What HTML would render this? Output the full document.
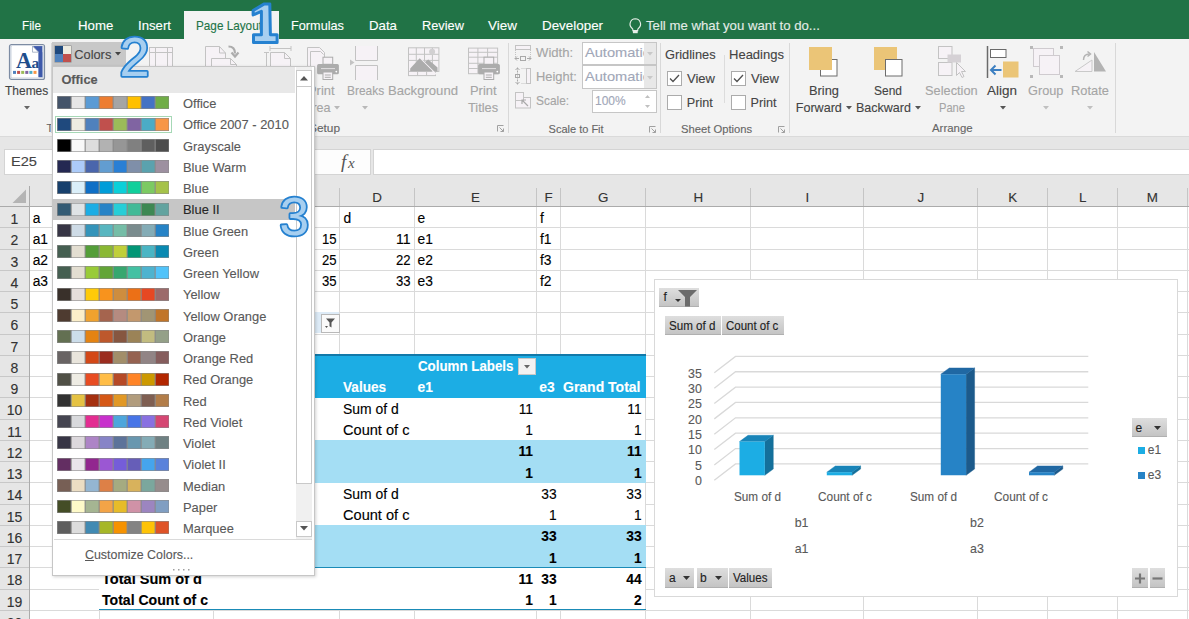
<!DOCTYPE html>
<html><head><meta charset="utf-8"><style>
html,body{margin:0;padding:0;width:1189px;height:619px;overflow:hidden;background:#fff;}
body{position:relative;font-family:"Liberation Sans", sans-serif;}
div{box-sizing:border-box;-webkit-text-stroke:0.12px currentColor;}
</style></head><body>
<div style="position:absolute;left:0px;top:0px;width:1189px;height:39px;background:#217346;"></div>
<div style="position:absolute;left:184px;top:11px;width:95px;height:28px;background:#f3f3f3;"></div>
<div style="position:absolute;left:21.50px;top:25.86px;line-height:0;font-size:13.4px;color:#ffffff;font-weight:normal;white-space:nowrap;transform:scaleX(0.8799);transform-origin:0 0;">File</div>
<div style="position:absolute;left:78.00px;top:25.86px;line-height:0;font-size:13.4px;color:#ffffff;font-weight:normal;white-space:nowrap;transform:scaleX(0.9875);transform-origin:0 0;">Home</div>
<div style="position:absolute;left:138.00px;top:25.86px;line-height:0;font-size:13.4px;color:#ffffff;font-weight:normal;white-space:nowrap;transform:scaleX(0.9847);transform-origin:0 0;">Insert</div>
<div style="position:absolute;left:291.00px;top:25.86px;line-height:0;font-size:13.4px;color:#ffffff;font-weight:normal;white-space:nowrap;transform:scaleX(0.9490);transform-origin:0 0;">Formulas</div>
<div style="position:absolute;left:369.00px;top:25.86px;line-height:0;font-size:13.4px;color:#ffffff;font-weight:normal;white-space:nowrap;transform:scaleX(0.9892);transform-origin:0 0;">Data</div>
<div style="position:absolute;left:422.00px;top:25.86px;line-height:0;font-size:13.4px;color:#ffffff;font-weight:normal;white-space:nowrap;transform:scaleX(0.9559);transform-origin:0 0;">Review</div>
<div style="position:absolute;left:488.00px;top:25.86px;line-height:0;font-size:13.4px;color:#ffffff;font-weight:normal;white-space:nowrap;transform:scaleX(1.0068);transform-origin:0 0;">View</div>
<div style="position:absolute;left:542.00px;top:25.86px;line-height:0;font-size:13.4px;color:#ffffff;font-weight:normal;white-space:nowrap;">Developer</div>
<div style="position:absolute;left:196.00px;top:25.86px;line-height:0;font-size:13.4px;color:#217346;font-weight:normal;white-space:nowrap;transform:scaleX(0.8770);transform-origin:0 0;">Page Layout</div>
<div style="position:absolute;left:646.00px;top:25.86px;line-height:0;font-size:13.4px;color:#e3ece6;font-weight:normal;white-space:nowrap;transform:scaleX(0.9857);transform-origin:0 0;">Tell me what you want to do...</div>
<svg style="position:absolute;left:628.5px;top:18.2px;overflow:visible;" width="13" height="16" viewBox="0 0 13 16"><path d="M6.3 0.8a5.3 5.3 0 0 0-3.3 9.4c.6.5.9 1 .9 1.7v.7h4.8v-.7c0-.7.3-1.2.9-1.7A5.3 5.3 0 0 0 6.3 0.8z" fill="none" stroke="#e6eee8" stroke-width="1.15"/><rect x="3.9" y="12.6" width="4.8" height="2.6" fill="#e6eee8"/></svg>
<div style="position:absolute;left:0px;top:39px;width:1189px;height:98px;background:#f3f3f3;"></div>
<div style="position:absolute;left:0px;top:136px;width:1189px;height:1px;background:#dadada;"></div>
<div style="position:absolute;left:0px;top:137px;width:1189px;height:49px;background:#e6e6e6;"></div>
<svg style="position:absolute;left:9px;top:44px;overflow:visible;" width="36" height="36" viewBox="0 0 36 36"><rect x="0.5" y="0.5" width="35" height="35" rx="2" fill="#eef1f5" stroke="#7d8ca3" stroke-width="1.2"/>
<rect x="2" y="2" width="32" height="32" fill="#f8f9fb" stroke="#b7c2d2" stroke-width="0.8"/>
<path d="M24.2 2.1H33.3V33H24.2z" fill="#3d59ab"/>
<path d="M2.8 2.1H23.5L29.6 8.2V33.3H2.8z" fill="#ffffff"/>
<path d="M23.5 2.1V8.2H29.6z" fill="#ffffff" stroke="#8d9bb3" stroke-width="0.7"/>
<text x="7" y="23.8" font-family="Liberation Serif" font-weight="bold" font-size="24" fill="#1f4e8c" transform="translate(7 23.8) scale(0.92 1) translate(-7 -23.8)">A</text>
<text x="22.6" y="23.8" font-family="Liberation Serif" font-weight="bold" font-size="15.5" fill="#1f4e8c">a</text>
<path d="M29.6 8.2V33.3H24z" fill="none"/><rect x="29.6" y="8.2" width="3.7" height="25" fill="#3d59ab"/>
<rect x="4" y="26.9" width="3" height="3" fill="#4f81bd"/><rect x="8.1" y="26.9" width="3" height="3" fill="#c0504d"/><rect x="12.2" y="26.9" width="3" height="3" fill="#9bbb59"/><rect x="16.3" y="26.9" width="3" height="3" fill="#8064a2"/><rect x="20.4" y="26.9" width="3" height="3" fill="#4bacc6"/><rect x="24.5" y="26.9" width="3" height="3" fill="#f79646"/></svg>
<div style="position:absolute;left:5.20px;top:90.63px;line-height:0;font-size:12.6px;color:#444444;font-weight:normal;white-space:nowrap;transform:scaleX(0.9513);transform-origin:0 0;">Themes</div>
<svg style="position:absolute;left:24.0px;top:105.75px;overflow:visible;" width="6" height="3.5" viewBox="0 0 6 3.5"><path d="M0 0H6L3.0 3.5z" fill="#666"/></svg>
<div style="position:absolute;left:46.50px;top:128.39px;line-height:0;font-size:11px;color:#666666;font-weight:normal;white-space:nowrap;">T</div>
<div style="position:absolute;left:51px;top:43px;width:1px;height:90px;background:#d8d8d8;"></div>
<div style="position:absolute;left:52px;top:42px;width:74px;height:24.5px;background:#c8c8c8;"></div>
<svg style="position:absolute;left:54px;top:45px;overflow:visible;" width="18" height="18" viewBox="0 0 18 18"><rect x="0.5" y="0.5" width="17" height="17" fill="#888"/><rect x="1" y="1" width="8" height="8" fill="#1f497d"/><rect x="9" y="1" width="8" height="8" fill="#eeece1"/><rect x="1" y="9" width="8" height="8" fill="#4f81bd"/><rect x="9" y="9" width="8" height="8" fill="#c0504d"/></svg>
<div style="position:absolute;left:74.30px;top:54.56px;line-height:0;font-size:12.8px;color:#444444;font-weight:normal;white-space:nowrap;">Colors</div>
<svg style="position:absolute;left:114.5px;top:51.95px;overflow:visible;" width="6" height="3.5" viewBox="0 0 6 3.5"><path d="M0 0H6L3.0 3.5z" fill="#444"/></svg>
<svg style="position:absolute;left:148px;top:46px;overflow:visible;" width="26" height="22" viewBox="0 0 26 22"><rect x="1.5" y="1.5" width="23" height="21" fill="#f6f2f6" stroke="#c3c3c3"/><path d="M7.5 1.5v21M19.5 1.5v21M1.5 6.5h23" stroke="#c3c3c3"/></svg>
<svg style="position:absolute;left:204px;top:44px;overflow:visible;" width="36" height="26" viewBox="0 0 36 26"><path d="M1.5 25V2.5h14l6 6.5V25" fill="#f6f2f6" stroke="#c3c3c3"/><path d="M15.5 2.5V9h6" fill="none" stroke="#c3c3c3"/><path d="M7.5 25V14.5h19l6 6V25" fill="#f6f2f6" stroke="#c3c3c3"/><path d="M26.5 14.5V20.5h6" fill="none" stroke="#c3c3c3"/><path d="M24.5 2.5c4 0 6.5 2.5 6.5 7" fill="none" stroke="#acacac" stroke-width="2.2"/><path d="M27.5 8.5l3.5 4 3.5-4" fill="none" stroke="#acacac" stroke-width="2.2"/></svg>
<svg style="position:absolute;left:264px;top:44px;overflow:visible;" width="30" height="26" viewBox="0 0 30 26"><path d="M6 4.5h21M6 2v5M27 2v5M2.5 8.5v18M0 8.5h5" fill="none" stroke="#c3c3c3"/><path d="M6.5 26V8.5h14l6 6V26" fill="#f6f2f6" stroke="#c3c3c3"/><path d="M20.5 8.5v6h6" fill="none" stroke="#c3c3c3"/></svg>
<svg style="position:absolute;left:305px;top:46px;overflow:visible;" width="36" height="36" viewBox="0 0 36 36"><path d="M2.5 28.5V1.5h12l5 5v8" fill="#f6f2f6" stroke="#c3c3c3"/><path d="M5.5 28.5V5.5h10l3 3" fill="none" stroke="#c3c3c3"/><rect x="18" y="11.2" width="9.7" height="7.1" fill="#f6f2f6" stroke="#acacac"/><rect x="12.1" y="18" width="21.8" height="10.3" rx="1.5" fill="#acacac"/><path d="M16 22.6h14" stroke="#e2dfe2" stroke-width="1"/><circle cx="31.3" cy="25.6" r="0.9" fill="#fff"/><rect x="18" y="26" width="9.7" height="7.5" fill="#f6f2f6" stroke="#acacac"/><path d="M19.8 29h6M19.8 31.3h6" stroke="#acacac"/></svg>
<div style="position:absolute;left:308.00px;top:91.03px;line-height:0;font-size:12.6px;color:#a5a5a5;font-weight:normal;white-space:nowrap;transform:scaleX(1.0267);transform-origin:0 0;">Print</div>
<div style="position:absolute;left:304.00px;top:108.23px;line-height:0;font-size:12.6px;color:#a5a5a5;font-weight:normal;white-space:nowrap;">Area</div>
<svg style="position:absolute;left:334.0px;top:105.75px;overflow:visible;" width="6" height="3.5" viewBox="0 0 6 3.5"><path d="M0 0H6L3.0 3.5z" fill="#b8b8b8"/></svg>
<svg style="position:absolute;left:348px;top:46px;overflow:visible;" width="32" height="34" viewBox="0 0 32 34"><path d="M7.5 0v14.5h22V0" fill="#f6f2f6" stroke="#c3c3c3"/><path d="M7.5 34V19.5h22V34" fill="#f6f2f6" stroke="#c3c3c3"/><path d="M2 13.5l4.5 3-4.5 3z" fill="#c3c3c3"/></svg>
<div style="position:absolute;left:346.80px;top:91.03px;line-height:0;font-size:12.6px;color:#a5a5a5;font-weight:normal;white-space:nowrap;transform:scaleX(0.9486);transform-origin:0 0;">Breaks</div>
<svg style="position:absolute;left:362.4px;top:105.75px;overflow:visible;" width="6" height="3.5" viewBox="0 0 6 3.5"><path d="M0 0H6L3.0 3.5z" fill="#b8b8b8"/></svg>
<svg style="position:absolute;left:407px;top:46px;overflow:visible;" width="34" height="34" viewBox="0 0 34 34"><rect x="1.5" y="1.8" width="30.4" height="23.6" fill="#f6f2f6" stroke="#c3c3c3"/><path d="M1.5 8.3h30.4M1.5 14.4h30.4M9.3 1.8v23.6M17.5 1.8v23.6M25.4 1.8v23.6" stroke="#c3c3c3"/><rect x="1.5" y="25.4" width="27" height="4.2" fill="#f6f2f6" stroke="#c3c3c3"/><path d="M10.6 25.4v4.2M19.6 25.4v4.2" stroke="#c3c3c3"/><circle cx="25.1" cy="5.7" r="3" fill="#d2d0d2"/><path d="M17.5 16.2L21.3 13.4L30.5 21.6V25.5H26z" fill="#acacac"/><path d="M12.7 12.2L29 28.2" stroke="#f6f2f6" stroke-width="1.6"/><path d="M3.2 25.2V22.5L12.7 12.2L25.7 25.2z" fill="#acacac"/></svg>
<div style="position:absolute;left:388.00px;top:90.53px;line-height:0;font-size:12.6px;color:#a5a5a5;font-weight:normal;white-space:nowrap;transform:scaleX(1.0409);transform-origin:0 0;">Background</div>
<svg style="position:absolute;left:466px;top:46px;overflow:visible;" width="36" height="36" viewBox="0 0 36 36"><rect x="2.5" y="2.1" width="29.1" height="25.6" fill="#f6f2f6" stroke="#c3c3c3"/><path d="M2.5 6.3h29.1M2.5 11.2h29.1M2.5 17.3h29.1M2.5 22.5h29.1M11.9 2.1v25.6M21.6 2.1v25.6" stroke="#c3c3c3"/><rect x="18" y="11.2" width="9.7" height="7.1" fill="#f6f2f6" stroke="#acacac"/><rect x="12.1" y="18" width="21.8" height="10.3" rx="1.5" fill="#acacac"/><path d="M16 22.6h14" stroke="#e2dfe2" stroke-width="1"/><circle cx="31.3" cy="25.6" r="0.9" fill="#fff"/><rect x="18" y="26" width="9.7" height="7.5" fill="#f6f2f6" stroke="#acacac"/><path d="M19.8 29h6M19.8 31.3h6" stroke="#acacac"/></svg>
<div style="position:absolute;left:469.80px;top:90.53px;line-height:0;font-size:12.6px;color:#a5a5a5;font-weight:normal;white-space:nowrap;transform:scaleX(1.0267);transform-origin:0 0;">Print</div>
<div style="position:absolute;left:467.90px;top:107.93px;line-height:0;font-size:12.6px;color:#a5a5a5;font-weight:normal;white-space:nowrap;transform:scaleX(1.0156);transform-origin:0 0;">Titles</div>
<div style="position:absolute;left:309.00px;top:128.39px;line-height:0;font-size:11px;color:#666666;font-weight:normal;white-space:nowrap;transform:scaleX(1.0784);transform-origin:0 0;">Setup</div>
<svg style="position:absolute;left:497px;top:125px;overflow:visible;" width="7" height="7" viewBox="0 0 7 7"><path d="M0.5 6.5V0.5H6.5" fill="none" stroke="#a0a0a0" stroke-width="1"/><path d="M2.5 2.5L6.5 6.5M6.5 3.5V6.5H3.5" fill="none" stroke="#a0a0a0" stroke-width="1"/></svg>
<div style="position:absolute;left:508px;top:43px;width:1px;height:90px;background:#d8d8d8;"></div>
<svg style="position:absolute;left:514px;top:44px;overflow:visible;" width="19" height="18" viewBox="0 0 19 18"><rect x="1.5" y="1.5" width="15" height="4" fill="#f6f2f6" stroke="#c3c3c3"/><path d="M1.5 6v7M16.5 6v7" stroke="#c3c3c3" stroke-dasharray="1 1"/><path d="M1 14.5h4M13 14.5h4M3 12.5l-2 2 2 2M15 12.5l2 2-2 2" fill="none" stroke="#a9a9a9"/><rect x="6.5" y="12.5" width="5" height="4" fill="none" stroke="#a9a9a9"/></svg>
<div style="position:absolute;left:535.70px;top:53.33px;line-height:0;font-size:12.6px;color:#a5a5a5;font-weight:normal;white-space:nowrap;transform:scaleX(1.0418);transform-origin:0 0;">Width:</div>
<div style="position:absolute;left:582px;top:41.5px;width:74.5px;height:23.5px;background:#ffffff;border:1px solid #c6c6c6;"></div>
<div style="position:absolute;left:644px;top:42.5px;width:11.5px;height:21.5px;background:#e8e8e8;"></div>
<div style="position:absolute;left:583px;top:42.5px;width:60.5px;height:21.5px;overflow:hidden;"><div style="position:absolute;left:1.50px;top:10.83px;line-height:0;font-size:12.6px;color:#a1a7b8;font-weight:normal;white-space:nowrap;transform:scaleX(1.1602);transform-origin:0 0;">Automatic</div></div>
<svg style="position:absolute;left:647.0px;top:51.75px;overflow:visible;" width="6" height="3.5" viewBox="0 0 6 3.5"><path d="M0 0H6L3.0 3.5z" fill="#c8c8c8"/></svg>
<svg style="position:absolute;left:514px;top:67px;overflow:visible;" width="19" height="19" viewBox="0 0 19 19"><path d="M3.5 0.5v17" stroke="#a9a9a9" stroke-dasharray="2 1"/><path d="M1.5 3l2-2 2 2M1.5 15l2 2 2-2" fill="none" stroke="#a9a9a9"/><rect x="1.5" y="7.5" width="4" height="3" fill="none" stroke="#a9a9a9"/><path d="M7.5 1.5h5M7.5 16.5h5" stroke="#c3c3c3" stroke-dasharray="1 1"/><rect x="12.5" y="1.5" width="4" height="15" fill="#f6f2f6" stroke="#c3c3c3"/></svg>
<div style="position:absolute;left:535.70px;top:77.23px;line-height:0;font-size:12.6px;color:#a5a5a5;font-weight:normal;white-space:nowrap;transform:scaleX(1.0220);transform-origin:0 0;">Height:</div>
<div style="position:absolute;left:582px;top:65px;width:74.5px;height:23.5px;background:#ffffff;border:1px solid #c6c6c6;"></div>
<div style="position:absolute;left:644px;top:66px;width:11.5px;height:21.5px;background:#e8e8e8;"></div>
<div style="position:absolute;left:583px;top:66px;width:60.5px;height:21.5px;overflow:hidden;"><div style="position:absolute;left:1.50px;top:11.23px;line-height:0;font-size:12.6px;color:#a1a7b8;font-weight:normal;white-space:nowrap;transform:scaleX(1.1602);transform-origin:0 0;">Automatic</div></div>
<svg style="position:absolute;left:647.0px;top:75.75px;overflow:visible;" width="6" height="3.5" viewBox="0 0 6 3.5"><path d="M0 0H6L3.0 3.5z" fill="#c8c8c8"/></svg>
<svg style="position:absolute;left:514px;top:91px;overflow:visible;" width="19" height="19" viewBox="0 0 19 19"><rect x="1.5" y="1.5" width="8" height="8" fill="none" stroke="#c3c3c3" stroke-dasharray="1 1"/><rect x="1.5" y="6.5" width="15" height="10.5" fill="#f6f2f6" stroke="#c3c3c3"/><rect x="1.5" y="1.5" width="8" height="8" fill="#f6f2f6" stroke="#c3c3c3"/><path d="M8 9l6 6M8 13V9h4" fill="none" stroke="#a9a9a9" stroke-width="1.2"/></svg>
<div style="position:absolute;left:535.70px;top:101.13px;line-height:0;font-size:12.6px;color:#a5a5a5;font-weight:normal;white-space:nowrap;transform:scaleX(0.9452);transform-origin:0 0;">Scale:</div>
<div style="position:absolute;left:591.5px;top:89.5px;width:65px;height:23px;background:#ffffff;border:1px solid #c6c6c6;"></div>
<div style="position:absolute;left:594.70px;top:101.13px;line-height:0;font-size:12.6px;color:#a1a7b8;font-weight:normal;white-space:nowrap;transform:scaleX(0.9526);transform-origin:0 0;">100%</div>
<svg style="position:absolute;left:645px;top:104.5px;overflow:visible;" width="5" height="3" viewBox="0 0 5 3"><path d="M0 0H5L2.5 3z" fill="#c0c0c0"/></svg>
<svg style="position:absolute;left:645px;top:95px;overflow:visible;" width="5" height="3" viewBox="0 0 5 3"><path d="M0 3H5L2.5 0z" fill="#c0c0c0"/></svg>
<div style="position:absolute;left:548.60px;top:128.69px;line-height:0;font-size:11px;color:#666666;font-weight:normal;white-space:nowrap;">Scale to Fit</div>
<svg style="position:absolute;left:649px;top:125.5px;overflow:visible;" width="7" height="7" viewBox="0 0 7 7"><path d="M0.5 6.5V0.5H6.5" fill="none" stroke="#a0a0a0" stroke-width="1"/><path d="M2.5 2.5L6.5 6.5M6.5 3.5V6.5H3.5" fill="none" stroke="#a0a0a0" stroke-width="1"/></svg>
<div style="position:absolute;left:660px;top:43px;width:1px;height:90px;background:#d8d8d8;"></div>
<div style="position:absolute;left:665.00px;top:55.43px;line-height:0;font-size:12.6px;color:#444444;font-weight:normal;white-space:nowrap;transform:scaleX(1.0177);transform-origin:0 0;">Gridlines</div>
<div style="position:absolute;left:729.00px;top:55.43px;line-height:0;font-size:12.6px;color:#444444;font-weight:normal;white-space:nowrap;transform:scaleX(1.0331);transform-origin:0 0;">Headings</div>
<div style="position:absolute;left:724px;top:55px;width:1px;height:48px;background:#dcdcdc;"></div>
<svg style="position:absolute;left:667px;top:71px;overflow:visible;" width="15" height="15" viewBox="0 0 15 15"><rect x="0.5" y="0.5" width="14" height="14" fill="#fff" stroke="#ababab"/><path d="M3 7.5l3 3 6-6.5" fill="none" stroke="#505050" stroke-width="1.3"/></svg>
<svg style="position:absolute;left:667px;top:95px;overflow:visible;" width="15" height="15" viewBox="0 0 15 15"><rect x="0.5" y="0.5" width="14" height="14" fill="#fff" stroke="#ababab"/></svg>
<svg style="position:absolute;left:731px;top:71px;overflow:visible;" width="15" height="15" viewBox="0 0 15 15"><rect x="0.5" y="0.5" width="14" height="14" fill="#fff" stroke="#ababab"/><path d="M3 7.5l3 3 6-6.5" fill="none" stroke="#505050" stroke-width="1.3"/></svg>
<svg style="position:absolute;left:731px;top:95px;overflow:visible;" width="15" height="15" viewBox="0 0 15 15"><rect x="0.5" y="0.5" width="14" height="14" fill="#fff" stroke="#ababab"/></svg>
<div style="position:absolute;left:686.80px;top:79.23px;line-height:0;font-size:12.6px;color:#444444;font-weight:normal;white-space:nowrap;transform:scaleX(1.0338);transform-origin:0 0;">View</div>
<div style="position:absolute;left:686.80px;top:103.43px;line-height:0;font-size:12.6px;color:#444444;font-weight:normal;white-space:nowrap;">Print</div>
<div style="position:absolute;left:750.60px;top:79.23px;line-height:0;font-size:12.6px;color:#444444;font-weight:normal;white-space:nowrap;transform:scaleX(1.0338);transform-origin:0 0;">View</div>
<div style="position:absolute;left:750.60px;top:103.43px;line-height:0;font-size:12.6px;color:#444444;font-weight:normal;white-space:nowrap;">Print</div>
<div style="position:absolute;left:680.80px;top:128.69px;line-height:0;font-size:11px;color:#666666;font-weight:normal;white-space:nowrap;transform:scaleX(1.0213);transform-origin:0 0;">Sheet Options</div>
<svg style="position:absolute;left:777.5px;top:125.5px;overflow:visible;" width="7" height="7" viewBox="0 0 7 7"><path d="M0.5 6.5V0.5H6.5" fill="none" stroke="#a0a0a0" stroke-width="1"/><path d="M2.5 2.5L6.5 6.5M6.5 3.5V6.5H3.5" fill="none" stroke="#a0a0a0" stroke-width="1"/></svg>
<div style="position:absolute;left:789px;top:43px;width:1px;height:90px;background:#d8d8d8;"></div>
<svg style="position:absolute;left:808px;top:46px;overflow:visible;" width="32" height="32" viewBox="0 0 32 32"><rect x="12.5" y="13.5" width="16.5" height="16.5" fill="#fff" stroke="#6d6d6d"/><rect x="1" y="1" width="23" height="23" fill="#ebc577"/></svg>
<div style="position:absolute;left:808.60px;top:91.03px;line-height:0;font-size:12.6px;color:#444444;font-weight:normal;white-space:nowrap;transform:scaleX(1.0165);transform-origin:0 0;">Bring</div>
<div style="position:absolute;left:795.70px;top:108.23px;line-height:0;font-size:12.6px;color:#444444;font-weight:normal;white-space:nowrap;">Forward</div>
<svg style="position:absolute;left:846.0px;top:105.75px;overflow:visible;" width="6" height="3.5" viewBox="0 0 6 3.5"><path d="M0 0H6L3.0 3.5z" fill="#555"/></svg>
<svg style="position:absolute;left:873px;top:46px;overflow:visible;" width="32" height="32" viewBox="0 0 32 32"><rect x="1" y="1" width="23" height="23" fill="#ebc577"/><rect x="12.5" y="13.5" width="16.5" height="16.5" fill="#fff" stroke="#6d6d6d"/></svg>
<div style="position:absolute;left:874.30px;top:91.03px;line-height:0;font-size:12.6px;color:#444444;font-weight:normal;white-space:nowrap;transform:scaleX(0.9515);transform-origin:0 0;">Send</div>
<div style="position:absolute;left:856.20px;top:108.23px;line-height:0;font-size:12.6px;color:#444444;font-weight:normal;white-space:nowrap;transform:scaleX(0.9941);transform-origin:0 0;">Backward</div>
<svg style="position:absolute;left:915.0px;top:105.75px;overflow:visible;" width="6" height="3.5" viewBox="0 0 6 3.5"><path d="M0 0H6L3.0 3.5z" fill="#555"/></svg>
<svg style="position:absolute;left:936px;top:45px;overflow:visible;" width="32" height="34" viewBox="0 0 32 34"><rect x="2.5" y="1.5" width="13.5" height="12" fill="#f6f2f6" stroke="#c3c3c3"/><rect x="2.5" y="17.5" width="13.5" height="13" fill="#f6f2f6" stroke="#c3c3c3"/><rect x="11.5" y="9.5" width="13.5" height="8" fill="#d5d1d5"/><path d="M20.5 17.5v13l3-3 2.5 5 2-1-2.5-5h4z" fill="#f6f2f6" stroke="#c3c3c3"/></svg>
<div style="position:absolute;left:925.00px;top:91.03px;line-height:0;font-size:12.6px;color:#a5a5a5;font-weight:normal;white-space:nowrap;transform:scaleX(1.0167);transform-origin:0 0;">Selection</div>
<div style="position:absolute;left:938.50px;top:107.83px;line-height:0;font-size:12.6px;color:#a5a5a5;font-weight:normal;white-space:nowrap;transform:scaleX(0.8835);transform-origin:0 0;">Pane</div>
<svg style="position:absolute;left:985px;top:45px;overflow:visible;" width="36" height="34" viewBox="0 0 36 34"><path d="M2.5 1v32" stroke="#6a6a6a" stroke-width="1.5"/><rect x="5.5" y="4.5" width="15.5" height="8" fill="#fff" stroke="#6a6a6a"/><rect x="18" y="16.5" width="15.5" height="16" fill="#ebc577"/><path d="M16.5 25H7" stroke="#3c7fc1" stroke-width="2"/><path d="M10.5 20.5L6 25l4.5 4.5" fill="none" stroke="#3c7fc1" stroke-width="2"/></svg>
<div style="position:absolute;left:987.00px;top:91.03px;line-height:0;font-size:12.6px;color:#444444;font-weight:normal;white-space:nowrap;transform:scaleX(1.0707);transform-origin:0 0;">Align</div>
<svg style="position:absolute;left:999.5px;top:105.55px;overflow:visible;" width="6" height="3.5" viewBox="0 0 6 3.5"><path d="M0 0H6L3.0 3.5z" fill="#555"/></svg>
<svg style="position:absolute;left:1029px;top:45px;overflow:visible;" width="36" height="34" viewBox="0 0 36 34"><rect x="4.5" y="3.5" width="20" height="18" fill="#f6f2f6" stroke="#cfcbcf" stroke-dasharray="0"/><rect x="10.5" y="10.5" width="20" height="19" fill="#f6f2f6" stroke="#cfcbcf"/><path d="M4.5 21.5V3.5h20" fill="none" stroke="#cfcbcf"/><rect x="1" y="1" width="3" height="3" fill="#b8b8b8"/><rect x="31" y="1" width="3" height="3" fill="#b8b8b8"/><rect x="1" y="30" width="3" height="3" fill="#b8b8b8"/><rect x="31" y="30" width="3" height="3" fill="#b8b8b8"/></svg>
<div style="position:absolute;left:1028.00px;top:91.03px;line-height:0;font-size:12.6px;color:#a5a5a5;font-weight:normal;white-space:nowrap;transform:scaleX(1.0108);transform-origin:0 0;">Group</div>
<svg style="position:absolute;left:1043.0px;top:105.55px;overflow:visible;" width="6" height="3.5" viewBox="0 0 6 3.5"><path d="M0 0H6L3.0 3.5z" fill="#c0c0c0"/></svg>
<svg style="position:absolute;left:1073px;top:49px;overflow:visible;" width="36" height="26" viewBox="0 0 36 26"><path d="M2 22.5L19 11v11.5z" fill="#f6f2f6" stroke="#c9c9c9"/><path d="M21 22.5V3l12 19.5z" fill="#b3b3b3"/><path d="M10.5 11c0-4 2.5-6 6-6" fill="none" stroke="#b3b3b3" stroke-width="1.5"/><path d="M14.5 2.5l3 2.5-3 2.5" fill="none" stroke="#b3b3b3" stroke-width="1.5"/></svg>
<div style="position:absolute;left:1071.40px;top:91.03px;line-height:0;font-size:12.6px;color:#a5a5a5;font-weight:normal;white-space:nowrap;transform:scaleX(1.0209);transform-origin:0 0;">Rotate</div>
<svg style="position:absolute;left:1087.0px;top:105.55px;overflow:visible;" width="6" height="3.5" viewBox="0 0 6 3.5"><path d="M0 0H6L3.0 3.5z" fill="#c0c0c0"/></svg>
<div style="position:absolute;left:931.80px;top:127.79px;line-height:0;font-size:11px;color:#666666;font-weight:normal;white-space:nowrap;transform:scaleX(1.0374);transform-origin:0 0;">Arrange</div>
<div style="position:absolute;left:1115px;top:43px;width:1px;height:90px;background:#d8d8d8;"></div>
<div style="position:absolute;left:4px;top:148.5px;width:307px;height:26px;background:#ffffff;border:1px solid #d4d4d4;"></div>
<div style="position:absolute;left:10.50px;top:161.80px;line-height:0;font-size:13px;color:#444;font-weight:normal;white-space:nowrap;transform:scaleX(1.1240);transform-origin:0 0;">E25</div>
<div style="position:absolute;left:314px;top:148.5px;width:57px;height:26px;background:#fdfdfd;border:1px solid #d4d4d4;"></div>
<svg style="position:absolute;left:338px;top:150px" width="24" height="24"><text x="3" y="18" font-family="Liberation Serif" font-style="italic" font-size="19" fill="#555">f</text><text x="10" y="17.5" font-family="Liberation Serif" font-style="italic" font-size="15" fill="#555">x</text></svg>
<div style="position:absolute;left:373px;top:148.5px;width:830px;height:26px;background:#ffffff;border:1px solid #d4d4d4;"></div>
<div style="position:absolute;left:0px;top:186px;width:1189px;height:20px;background:#e6e6e6;"></div>
<div style="position:absolute;left:0px;top:206px;width:1189px;height:1px;background:#ababab;"></div>
<div style="position:absolute;left:30px;top:207px;width:1159px;height:412px;background:#ffffff;"></div>
<div style="position:absolute;left:0px;top:207px;width:29px;height:412px;background:#e6e6e6;"></div>
<div style="position:absolute;left:29px;top:186px;width:1px;height:433px;background:#ababab;"></div>
<svg style="position:absolute;left:12px;top:189px;overflow:visible;" width="15" height="15" viewBox="0 0 15 15"><path d="M14 0.5V14H0.5z" fill="#b4b4b4"/></svg>
<div style="position:absolute;left:99px;top:207px;width:1px;height:412px;background:#dadada;"></div>
<div style="position:absolute;left:99px;top:188px;width:1px;height:18px;background:#c5c5c5;"></div>
<div style="position:absolute;left:213px;top:207px;width:1px;height:412px;background:#dadada;"></div>
<div style="position:absolute;left:213px;top:188px;width:1px;height:18px;background:#c5c5c5;"></div>
<div style="position:absolute;left:339px;top:207px;width:1px;height:412px;background:#dadada;"></div>
<div style="position:absolute;left:339px;top:188px;width:1px;height:18px;background:#c5c5c5;"></div>
<div style="position:absolute;left:414px;top:207px;width:1px;height:412px;background:#dadada;"></div>
<div style="position:absolute;left:414px;top:188px;width:1px;height:18px;background:#c5c5c5;"></div>
<div style="position:absolute;left:536px;top:207px;width:1px;height:412px;background:#dadada;"></div>
<div style="position:absolute;left:536px;top:188px;width:1px;height:18px;background:#c5c5c5;"></div>
<div style="position:absolute;left:560px;top:207px;width:1px;height:412px;background:#dadada;"></div>
<div style="position:absolute;left:560px;top:188px;width:1px;height:18px;background:#c5c5c5;"></div>
<div style="position:absolute;left:645px;top:207px;width:1px;height:412px;background:#dadada;"></div>
<div style="position:absolute;left:645px;top:188px;width:1px;height:18px;background:#c5c5c5;"></div>
<div style="position:absolute;left:750px;top:207px;width:1px;height:412px;background:#dadada;"></div>
<div style="position:absolute;left:750px;top:188px;width:1px;height:18px;background:#c5c5c5;"></div>
<div style="position:absolute;left:863px;top:207px;width:1px;height:412px;background:#dadada;"></div>
<div style="position:absolute;left:863px;top:188px;width:1px;height:18px;background:#c5c5c5;"></div>
<div style="position:absolute;left:977px;top:207px;width:1px;height:412px;background:#dadada;"></div>
<div style="position:absolute;left:977px;top:188px;width:1px;height:18px;background:#c5c5c5;"></div>
<div style="position:absolute;left:1047px;top:207px;width:1px;height:412px;background:#dadada;"></div>
<div style="position:absolute;left:1047px;top:188px;width:1px;height:18px;background:#c5c5c5;"></div>
<div style="position:absolute;left:1117px;top:207px;width:1px;height:412px;background:#dadada;"></div>
<div style="position:absolute;left:1117px;top:188px;width:1px;height:18px;background:#c5c5c5;"></div>
<div style="position:absolute;left:1187px;top:207px;width:1px;height:412px;background:#dadada;"></div>
<div style="position:absolute;left:1187px;top:188px;width:1px;height:18px;background:#c5c5c5;"></div>
<div style="position:absolute;left:30px;top:227px;width:1159px;height:1px;background:#dadada;"></div>
<div style="position:absolute;left:0px;top:227px;width:29px;height:1px;background:#c8c8c8;"></div>
<div style="position:absolute;left:30px;top:249px;width:1159px;height:1px;background:#dadada;"></div>
<div style="position:absolute;left:0px;top:249px;width:29px;height:1px;background:#c8c8c8;"></div>
<div style="position:absolute;left:30px;top:270px;width:1159px;height:1px;background:#dadada;"></div>
<div style="position:absolute;left:0px;top:270px;width:29px;height:1px;background:#c8c8c8;"></div>
<div style="position:absolute;left:30px;top:291px;width:1159px;height:1px;background:#dadada;"></div>
<div style="position:absolute;left:0px;top:291px;width:29px;height:1px;background:#c8c8c8;"></div>
<div style="position:absolute;left:30px;top:312px;width:1159px;height:1px;background:#dadada;"></div>
<div style="position:absolute;left:0px;top:312px;width:29px;height:1px;background:#c8c8c8;"></div>
<div style="position:absolute;left:30px;top:334px;width:1159px;height:1px;background:#dadada;"></div>
<div style="position:absolute;left:0px;top:334px;width:29px;height:1px;background:#c8c8c8;"></div>
<div style="position:absolute;left:30px;top:355px;width:1159px;height:1px;background:#dadada;"></div>
<div style="position:absolute;left:0px;top:355px;width:29px;height:1px;background:#c8c8c8;"></div>
<div style="position:absolute;left:30px;top:376px;width:1159px;height:1px;background:#dadada;"></div>
<div style="position:absolute;left:0px;top:376px;width:29px;height:1px;background:#c8c8c8;"></div>
<div style="position:absolute;left:30px;top:397px;width:1159px;height:1px;background:#dadada;"></div>
<div style="position:absolute;left:0px;top:397px;width:29px;height:1px;background:#c8c8c8;"></div>
<div style="position:absolute;left:30px;top:419px;width:1159px;height:1px;background:#dadada;"></div>
<div style="position:absolute;left:0px;top:419px;width:29px;height:1px;background:#c8c8c8;"></div>
<div style="position:absolute;left:30px;top:440px;width:1159px;height:1px;background:#dadada;"></div>
<div style="position:absolute;left:0px;top:440px;width:29px;height:1px;background:#c8c8c8;"></div>
<div style="position:absolute;left:30px;top:461px;width:1159px;height:1px;background:#dadada;"></div>
<div style="position:absolute;left:0px;top:461px;width:29px;height:1px;background:#c8c8c8;"></div>
<div style="position:absolute;left:30px;top:482px;width:1159px;height:1px;background:#dadada;"></div>
<div style="position:absolute;left:0px;top:482px;width:29px;height:1px;background:#c8c8c8;"></div>
<div style="position:absolute;left:30px;top:504px;width:1159px;height:1px;background:#dadada;"></div>
<div style="position:absolute;left:0px;top:504px;width:29px;height:1px;background:#c8c8c8;"></div>
<div style="position:absolute;left:30px;top:525px;width:1159px;height:1px;background:#dadada;"></div>
<div style="position:absolute;left:0px;top:525px;width:29px;height:1px;background:#c8c8c8;"></div>
<div style="position:absolute;left:30px;top:546px;width:1159px;height:1px;background:#dadada;"></div>
<div style="position:absolute;left:0px;top:546px;width:29px;height:1px;background:#c8c8c8;"></div>
<div style="position:absolute;left:30px;top:567px;width:1159px;height:1px;background:#dadada;"></div>
<div style="position:absolute;left:0px;top:567px;width:29px;height:1px;background:#c8c8c8;"></div>
<div style="position:absolute;left:30px;top:589px;width:1159px;height:1px;background:#dadada;"></div>
<div style="position:absolute;left:0px;top:589px;width:29px;height:1px;background:#c8c8c8;"></div>
<div style="position:absolute;left:30px;top:610px;width:1159px;height:1px;background:#dadada;"></div>
<div style="position:absolute;left:0px;top:610px;width:29px;height:1px;background:#c8c8c8;"></div>
<div style="position:absolute;left:30px;top:631px;width:1159px;height:1px;background:#dadada;"></div>
<div style="position:absolute;left:0px;top:631px;width:29px;height:1px;background:#c8c8c8;"></div>
<div style="position:absolute;left:60.03px;top:197.66px;line-height:0;font-size:13.4px;color:#333;font-weight:normal;white-space:nowrap;">A</div>
<div style="position:absolute;left:151.78px;top:197.66px;line-height:0;font-size:13.4px;color:#333;font-weight:normal;white-space:nowrap;">B</div>
<div style="position:absolute;left:271.41px;top:197.66px;line-height:0;font-size:13.4px;color:#333;font-weight:normal;white-space:nowrap;">C</div>
<div style="position:absolute;left:372.16px;top:197.66px;line-height:0;font-size:13.4px;color:#333;font-weight:normal;white-space:nowrap;">D</div>
<div style="position:absolute;left:471.03px;top:197.66px;line-height:0;font-size:13.4px;color:#333;font-weight:normal;white-space:nowrap;">E</div>
<div style="position:absolute;left:544.41px;top:197.66px;line-height:0;font-size:13.4px;color:#333;font-weight:normal;white-space:nowrap;">F</div>
<div style="position:absolute;left:597.89px;top:197.66px;line-height:0;font-size:13.4px;color:#333;font-weight:normal;white-space:nowrap;">G</div>
<div style="position:absolute;left:693.41px;top:197.66px;line-height:0;font-size:13.4px;color:#333;font-weight:normal;white-space:nowrap;">H</div>
<div style="position:absolute;left:805.49px;top:197.66px;line-height:0;font-size:13.4px;color:#333;font-weight:normal;white-space:nowrap;">I</div>
<div style="position:absolute;left:917.55px;top:197.66px;line-height:0;font-size:13.4px;color:#333;font-weight:normal;white-space:nowrap;">J</div>
<div style="position:absolute;left:1008.28px;top:197.66px;line-height:0;font-size:13.4px;color:#333;font-weight:normal;white-space:nowrap;">K</div>
<div style="position:absolute;left:1078.97px;top:197.66px;line-height:0;font-size:13.4px;color:#333;font-weight:normal;white-space:nowrap;">L</div>
<div style="position:absolute;left:1146.82px;top:197.66px;line-height:0;font-size:13.4px;color:#333;font-weight:normal;white-space:nowrap;">M</div>
<div style="position:absolute;left:10.61px;top:219.05px;line-height:0;font-size:14px;color:#333;font-weight:normal;white-space:nowrap;">1</div>
<div style="position:absolute;left:10.61px;top:240.30px;line-height:0;font-size:14px;color:#333;font-weight:normal;white-space:nowrap;">2</div>
<div style="position:absolute;left:10.61px;top:261.55px;line-height:0;font-size:14px;color:#333;font-weight:normal;white-space:nowrap;">3</div>
<div style="position:absolute;left:10.61px;top:282.80px;line-height:0;font-size:14px;color:#333;font-weight:normal;white-space:nowrap;">4</div>
<div style="position:absolute;left:10.61px;top:304.05px;line-height:0;font-size:14px;color:#333;font-weight:normal;white-space:nowrap;">5</div>
<div style="position:absolute;left:10.61px;top:325.30px;line-height:0;font-size:14px;color:#333;font-weight:normal;white-space:nowrap;">6</div>
<div style="position:absolute;left:10.61px;top:346.55px;line-height:0;font-size:14px;color:#333;font-weight:normal;white-space:nowrap;">7</div>
<div style="position:absolute;left:10.61px;top:367.80px;line-height:0;font-size:14px;color:#333;font-weight:normal;white-space:nowrap;">8</div>
<div style="position:absolute;left:10.61px;top:389.05px;line-height:0;font-size:14px;color:#333;font-weight:normal;white-space:nowrap;">9</div>
<div style="position:absolute;left:6.71px;top:410.30px;line-height:0;font-size:14px;color:#333;font-weight:normal;white-space:nowrap;">10</div>
<div style="position:absolute;left:7.23px;top:431.55px;line-height:0;font-size:14px;color:#333;font-weight:normal;white-space:nowrap;">11</div>
<div style="position:absolute;left:6.71px;top:452.80px;line-height:0;font-size:14px;color:#333;font-weight:normal;white-space:nowrap;">12</div>
<div style="position:absolute;left:6.71px;top:474.05px;line-height:0;font-size:14px;color:#333;font-weight:normal;white-space:nowrap;">13</div>
<div style="position:absolute;left:6.71px;top:495.30px;line-height:0;font-size:14px;color:#333;font-weight:normal;white-space:nowrap;">14</div>
<div style="position:absolute;left:6.71px;top:516.55px;line-height:0;font-size:14px;color:#333;font-weight:normal;white-space:nowrap;">15</div>
<div style="position:absolute;left:6.71px;top:537.80px;line-height:0;font-size:14px;color:#333;font-weight:normal;white-space:nowrap;">16</div>
<div style="position:absolute;left:6.71px;top:559.05px;line-height:0;font-size:14px;color:#333;font-weight:normal;white-space:nowrap;">17</div>
<div style="position:absolute;left:6.71px;top:580.30px;line-height:0;font-size:14px;color:#333;font-weight:normal;white-space:nowrap;">18</div>
<div style="position:absolute;left:6.71px;top:601.55px;line-height:0;font-size:14px;color:#333;font-weight:normal;white-space:nowrap;">19</div>
<div style="position:absolute;left:6.71px;top:622.80px;line-height:0;font-size:14px;color:#333;font-weight:normal;white-space:nowrap;">20</div>
<div style="position:absolute;left:32.70px;top:218.62px;line-height:0;font-size:13.8px;color:#000000;font-weight:normal;white-space:nowrap;">a</div>
<div style="position:absolute;left:32.70px;top:239.87px;line-height:0;font-size:13.8px;color:#000000;font-weight:normal;white-space:nowrap;">a1</div>
<div style="position:absolute;left:32.70px;top:261.12px;line-height:0;font-size:13.8px;color:#000000;font-weight:normal;white-space:nowrap;">a2</div>
<div style="position:absolute;left:32.70px;top:282.37px;line-height:0;font-size:13.8px;color:#000000;font-weight:normal;white-space:nowrap;">a3</div>
<div style="position:absolute;left:102.00px;top:218.62px;line-height:0;font-size:13.8px;color:#000000;font-weight:normal;white-space:nowrap;">b</div>
<div style="position:absolute;left:102.00px;top:239.87px;line-height:0;font-size:13.8px;color:#000000;font-weight:normal;white-space:nowrap;">b1</div>
<div style="position:absolute;left:102.00px;top:261.12px;line-height:0;font-size:13.8px;color:#000000;font-weight:normal;white-space:nowrap;">b1</div>
<div style="position:absolute;left:102.00px;top:282.37px;line-height:0;font-size:13.8px;color:#000000;font-weight:normal;white-space:nowrap;">b2</div>
<div style="position:absolute;left:216.00px;top:218.62px;line-height:0;font-size:13.8px;color:#000000;font-weight:normal;white-space:nowrap;">c</div>
<div style="position:absolute;left:343.40px;top:218.62px;line-height:0;font-size:13.8px;color:#000000;font-weight:normal;white-space:nowrap;">d</div>
<div style="position:absolute;left:417.60px;top:218.62px;line-height:0;font-size:13.8px;color:#000000;font-weight:normal;white-space:nowrap;">e</div>
<div style="position:absolute;left:540.00px;top:218.62px;line-height:0;font-size:13.8px;color:#000000;font-weight:normal;white-space:nowrap;">f</div>
<div style="position:absolute;left:321.70px;top:239.87px;line-height:0;font-size:13.8px;color:#000000;font-weight:normal;white-space:nowrap;transform:scaleX(0.9511);transform-origin:0 0;">15</div>
<div style="position:absolute;left:395.60px;top:239.87px;line-height:0;font-size:13.8px;color:#000000;font-weight:normal;white-space:nowrap;transform:scaleX(1.0191);transform-origin:0 0;">11</div>
<div style="position:absolute;left:417.60px;top:239.87px;line-height:0;font-size:13.8px;color:#000000;font-weight:normal;white-space:nowrap;">e1</div>
<div style="position:absolute;left:540.00px;top:239.87px;line-height:0;font-size:13.8px;color:#000000;font-weight:normal;white-space:nowrap;">f1</div>
<div style="position:absolute;left:321.70px;top:261.12px;line-height:0;font-size:13.8px;color:#000000;font-weight:normal;white-space:nowrap;transform:scaleX(0.9511);transform-origin:0 0;">25</div>
<div style="position:absolute;left:395.60px;top:261.12px;line-height:0;font-size:13.8px;color:#000000;font-weight:normal;white-space:nowrap;transform:scaleX(0.9511);transform-origin:0 0;">22</div>
<div style="position:absolute;left:417.60px;top:261.12px;line-height:0;font-size:13.8px;color:#000000;font-weight:normal;white-space:nowrap;">e2</div>
<div style="position:absolute;left:540.00px;top:261.12px;line-height:0;font-size:13.8px;color:#000000;font-weight:normal;white-space:nowrap;">f3</div>
<div style="position:absolute;left:321.70px;top:282.37px;line-height:0;font-size:13.8px;color:#000000;font-weight:normal;white-space:nowrap;transform:scaleX(0.9511);transform-origin:0 0;">35</div>
<div style="position:absolute;left:395.60px;top:282.37px;line-height:0;font-size:13.8px;color:#000000;font-weight:normal;white-space:nowrap;transform:scaleX(0.9511);transform-origin:0 0;">33</div>
<div style="position:absolute;left:417.60px;top:282.37px;line-height:0;font-size:13.8px;color:#000000;font-weight:normal;white-space:nowrap;">e3</div>
<div style="position:absolute;left:540.00px;top:282.37px;line-height:0;font-size:13.8px;color:#000000;font-weight:normal;white-space:nowrap;">f2</div>
<div style="position:absolute;left:102.00px;top:324.87px;line-height:0;font-size:13.8px;color:#000000;font-weight:bold;white-space:nowrap;">f</div>
<div style="position:absolute;left:213px;top:312px;width:126px;height:21px;background:#ddebf7;"></div>
<div style="position:absolute;left:216.00px;top:324.87px;line-height:0;font-size:13.8px;color:#000000;font-weight:normal;white-space:nowrap;">(All)</div>
<div style="position:absolute;left:321px;top:314px;width:18.5px;height:19px;background:#fafafa;border:1px solid #b9b9b9;"></div>
<svg style="position:absolute;left:323px;top:316px;overflow:visible;" width="14" height="15" viewBox="0 0 14 15"><path d="M3 2.5h9l-3.5 4v5l-2 -1.2v-3.8z" fill="#555"/><path d="M2 10h3l-1.5 2z" fill="#555"/></svg>
<div style="position:absolute;left:99px;top:354.5px;width:546.7px;height:43.0px;background:#1cade4;"></div>
<div style="position:absolute;left:99px;top:354px;width:546.7px;height:1.8px;background:#1279a9;"></div>
<div style="position:absolute;left:99px;top:397.5px;width:546px;height:212.5px;background:#ffffff;"></div>
<div style="position:absolute;left:99px;top:440.0px;width:546.7px;height:42.5px;background:#a4def4;"></div>
<div style="position:absolute;left:99px;top:525.0px;width:546.7px;height:42.5px;background:#a4def4;"></div>
<div style="position:absolute;left:99px;top:566.5px;width:546.7px;height:1.5px;background:#1a8bb7;"></div>
<div style="position:absolute;left:99px;top:608.8px;width:546.7px;height:1.7px;background:#1a8bb7;"></div>
<div style="position:absolute;left:417.50px;top:367.12px;line-height:0;font-size:13.8px;color:#ffffff;font-weight:bold;white-space:nowrap;transform:scaleX(0.9655);transform-origin:0 0;">Column Labels</div>
<div style="position:absolute;left:518.4px;top:357.9px;width:17.5px;height:16.7px;background:#f2f2f2;border:1px solid #c8c8c8;"></div>
<svg style="position:absolute;left:524.2px;top:364.75px;overflow:visible;" width="6" height="3.5" viewBox="0 0 6 3.5"><path d="M0 0H6L3.0 3.5z" fill="#666"/></svg>
<div style="position:absolute;left:102.00px;top:388.12px;line-height:0;font-size:13.8px;color:#ffffff;font-weight:bold;white-space:nowrap;">Row Labels</div>
<div style="position:absolute;left:216.00px;top:388.12px;line-height:0;font-size:13.8px;color:#ffffff;font-weight:bold;white-space:nowrap;">b</div>
<div style="position:absolute;left:342.90px;top:388.12px;line-height:0;font-size:13.8px;color:#ffffff;font-weight:bold;white-space:nowrap;transform:scaleX(0.9855);transform-origin:0 0;">Values</div>
<div style="position:absolute;left:417.50px;top:388.12px;line-height:0;font-size:13.8px;color:#ffffff;font-weight:bold;white-space:nowrap;">e1</div>
<div style="position:absolute;left:539.35px;top:388.12px;line-height:0;font-size:13.8px;color:#ffffff;font-weight:bold;white-space:nowrap;">e3</div>
<div style="position:absolute;left:563.00px;top:388.12px;line-height:0;font-size:13.8px;color:#ffffff;font-weight:bold;white-space:nowrap;transform:scaleX(1.0142);transform-origin:0 0;">Grand Total</div>
<div style="position:absolute;left:342.90px;top:409.87px;line-height:0;font-size:13.8px;color:#000000;font-weight:normal;white-space:nowrap;transform:scaleX(1.0085);transform-origin:0 0;">Sum of d</div>
<div style="position:absolute;left:518.67px;top:409.87px;line-height:0;font-size:13.8px;color:#000000;font-weight:normal;white-space:nowrap;">11</div>
<div style="position:absolute;left:627.27px;top:409.87px;line-height:0;font-size:13.8px;color:#000000;font-weight:normal;white-space:nowrap;">11</div>
<div style="position:absolute;left:342.90px;top:431.12px;line-height:0;font-size:13.8px;color:#000000;font-weight:normal;white-space:nowrap;transform:scaleX(1.0572);transform-origin:0 0;">Count of c</div>
<div style="position:absolute;left:525.32px;top:431.12px;line-height:0;font-size:13.8px;color:#000000;font-weight:normal;white-space:nowrap;">1</div>
<div style="position:absolute;left:633.92px;top:431.12px;line-height:0;font-size:13.8px;color:#000000;font-weight:normal;white-space:nowrap;">1</div>
<div style="position:absolute;left:518.41px;top:452.37px;line-height:0;font-size:13.8px;color:#000000;font-weight:bold;white-space:nowrap;">11</div>
<div style="position:absolute;left:627.01px;top:452.37px;line-height:0;font-size:13.8px;color:#000000;font-weight:bold;white-space:nowrap;">11</div>
<div style="position:absolute;left:525.32px;top:473.62px;line-height:0;font-size:13.8px;color:#000000;font-weight:bold;white-space:nowrap;">1</div>
<div style="position:absolute;left:633.92px;top:473.62px;line-height:0;font-size:13.8px;color:#000000;font-weight:bold;white-space:nowrap;">1</div>
<div style="position:absolute;left:342.90px;top:494.87px;line-height:0;font-size:13.8px;color:#000000;font-weight:normal;white-space:nowrap;transform:scaleX(1.0085);transform-origin:0 0;">Sum of d</div>
<div style="position:absolute;left:541.25px;top:494.87px;line-height:0;font-size:13.8px;color:#000000;font-weight:normal;white-space:nowrap;">33</div>
<div style="position:absolute;left:626.25px;top:494.87px;line-height:0;font-size:13.8px;color:#000000;font-weight:normal;white-space:nowrap;">33</div>
<div style="position:absolute;left:342.90px;top:516.12px;line-height:0;font-size:13.8px;color:#000000;font-weight:normal;white-space:nowrap;transform:scaleX(1.0572);transform-origin:0 0;">Count of c</div>
<div style="position:absolute;left:548.92px;top:516.12px;line-height:0;font-size:13.8px;color:#000000;font-weight:normal;white-space:nowrap;">1</div>
<div style="position:absolute;left:633.92px;top:516.12px;line-height:0;font-size:13.8px;color:#000000;font-weight:normal;white-space:nowrap;">1</div>
<div style="position:absolute;left:541.25px;top:537.37px;line-height:0;font-size:13.8px;color:#000000;font-weight:bold;white-space:nowrap;">33</div>
<div style="position:absolute;left:626.25px;top:537.37px;line-height:0;font-size:13.8px;color:#000000;font-weight:bold;white-space:nowrap;">33</div>
<div style="position:absolute;left:548.92px;top:558.62px;line-height:0;font-size:13.8px;color:#000000;font-weight:bold;white-space:nowrap;">1</div>
<div style="position:absolute;left:633.92px;top:558.62px;line-height:0;font-size:13.8px;color:#000000;font-weight:bold;white-space:nowrap;">1</div>
<div style="position:absolute;left:518.41px;top:579.87px;line-height:0;font-size:13.8px;color:#000000;font-weight:bold;white-space:nowrap;">11</div>
<div style="position:absolute;left:541.25px;top:579.87px;line-height:0;font-size:13.8px;color:#000000;font-weight:bold;white-space:nowrap;">33</div>
<div style="position:absolute;left:626.25px;top:579.87px;line-height:0;font-size:13.8px;color:#000000;font-weight:bold;white-space:nowrap;">44</div>
<div style="position:absolute;left:525.32px;top:601.12px;line-height:0;font-size:13.8px;color:#000000;font-weight:bold;white-space:nowrap;">1</div>
<div style="position:absolute;left:548.92px;top:601.12px;line-height:0;font-size:13.8px;color:#000000;font-weight:bold;white-space:nowrap;">1</div>
<div style="position:absolute;left:633.92px;top:601.12px;line-height:0;font-size:13.8px;color:#000000;font-weight:bold;white-space:nowrap;">2</div>
<div style="position:absolute;left:101.50px;top:579.87px;line-height:0;font-size:13.8px;color:#000000;font-weight:bold;white-space:nowrap;transform:scaleX(1.0548);transform-origin:0 0;">Total Sum of d</div>
<div style="position:absolute;left:101.50px;top:601.12px;line-height:0;font-size:13.8px;color:#000000;font-weight:bold;white-space:nowrap;transform:scaleX(1.0193);transform-origin:0 0;">Total Count of c</div>
<div style="position:absolute;left:102.00px;top:409.87px;line-height:0;font-size:13.8px;color:#000000;font-weight:normal;white-space:nowrap;">a1</div>
<div style="position:absolute;left:216.00px;top:409.87px;line-height:0;font-size:13.8px;color:#000000;font-weight:normal;white-space:nowrap;">b1</div>
<div style="position:absolute;left:102.00px;top:494.87px;line-height:0;font-size:13.8px;color:#000000;font-weight:normal;white-space:nowrap;">a3</div>
<div style="position:absolute;left:216.00px;top:494.87px;line-height:0;font-size:13.8px;color:#000000;font-weight:normal;white-space:nowrap;">b2</div>
<div style="position:absolute;left:653.5px;top:279.3px;width:524.5px;height:317.99999999999994px;background:#ffffff;border:1px solid #d9d9d9;"></div>
<div style="position:absolute;left:659px;top:288.1px;width:40px;height:18.6px;background:linear-gradient(#dedede,#c4c4c4);border-bottom:1px solid #b0b0b0;"></div>
<div style="position:absolute;left:663.40px;top:297.14px;line-height:0;font-size:12px;color:#222;font-weight:normal;white-space:nowrap;">f</div>
<svg style="position:absolute;left:675.0px;top:299.0px;overflow:visible;" width="6" height="3" viewBox="0 0 6 3"><path d="M0 0H6L3.0 3z" fill="#333"/></svg>
<svg style="position:absolute;left:677px;top:288.7px;overflow:visible;" width="21" height="18" viewBox="0 0 21 18"><path d="M1 1h19l-7 7v9.5h-5V8z" fill="#6b6b6b"/></svg>
<div style="position:absolute;left:665px;top:315.9px;width:55.6px;height:19.3px;background:linear-gradient(#dedede,#c4c4c4);border-bottom:1px solid #b0b0b0;"></div>
<div style="position:absolute;left:669.20px;top:325.84px;line-height:0;font-size:12px;color:#222;font-weight:normal;white-space:nowrap;transform:scaleX(0.9683);transform-origin:0 0;">Sum of d</div>
<div style="position:absolute;left:722.1px;top:315.9px;width:61.7px;height:19.3px;background:linear-gradient(#dedede,#c4c4c4);border-bottom:1px solid #b0b0b0;"></div>
<div style="position:absolute;left:726.40px;top:325.84px;line-height:0;font-size:12px;color:#222;font-weight:normal;white-space:nowrap;transform:scaleX(0.9562);transform-origin:0 0;">Count of c</div>
<div style="position:absolute;left:694.90px;top:481.00px;line-height:0;font-size:12.4px;color:#595959;font-weight:normal;white-space:nowrap;">0</div>
<div style="position:absolute;left:694.90px;top:465.65px;line-height:0;font-size:12.4px;color:#595959;font-weight:normal;white-space:nowrap;">5</div>
<div style="position:absolute;left:688.01px;top:450.29px;line-height:0;font-size:12.4px;color:#595959;font-weight:normal;white-space:nowrap;">10</div>
<div style="position:absolute;left:688.01px;top:434.93px;line-height:0;font-size:12.4px;color:#595959;font-weight:normal;white-space:nowrap;">15</div>
<div style="position:absolute;left:688.01px;top:419.57px;line-height:0;font-size:12.4px;color:#595959;font-weight:normal;white-space:nowrap;">20</div>
<div style="position:absolute;left:688.01px;top:404.22px;line-height:0;font-size:12.4px;color:#595959;font-weight:normal;white-space:nowrap;">25</div>
<div style="position:absolute;left:688.01px;top:388.86px;line-height:0;font-size:12.4px;color:#595959;font-weight:normal;white-space:nowrap;">30</div>
<div style="position:absolute;left:688.01px;top:373.50px;line-height:0;font-size:12.4px;color:#595959;font-weight:normal;white-space:nowrap;">35</div>
<svg style="position:absolute;left:653.5px;top:279.3px;overflow:visible;" width="524" height="317" viewBox="0 0 524 317"><path d="M60.299999999999955 201.29999999999995 L81.5 184.89999999999998 H434.29999999999995" fill="none" stroke="#d9d9d9" stroke-width="1.3"/><path d="M60.299999999999955 185.94285714285712 L81.5 169.54285714285714 H434.29999999999995" fill="none" stroke="#d9d9d9" stroke-width="1.3"/><path d="M60.299999999999955 170.58571428571423 L81.5 154.18571428571425 H434.29999999999995" fill="none" stroke="#d9d9d9" stroke-width="1.3"/><path d="M60.299999999999955 155.2285714285714 L81.5 138.82857142857142 H434.29999999999995" fill="none" stroke="#d9d9d9" stroke-width="1.3"/><path d="M60.299999999999955 139.8714285714285 L81.5 123.47142857142853 H434.29999999999995" fill="none" stroke="#d9d9d9" stroke-width="1.3"/><path d="M60.299999999999955 124.51428571428568 L81.5 108.1142857142857 H434.29999999999995" fill="none" stroke="#d9d9d9" stroke-width="1.3"/><path d="M60.299999999999955 109.15714285714279 L81.5 92.75714285714281 H434.29999999999995" fill="none" stroke="#d9d9d9" stroke-width="1.3"/><path d="M60.299999999999955 93.79999999999995 L81.5 77.39999999999998 H434.29999999999995" fill="none" stroke="#d9d9d9" stroke-width="1.3"/></svg>
<svg style="position:absolute;left:653.5px;top:279.3px;overflow:visible;" width="524" height="317" viewBox="0 0 524 317"><path d="M110.8 162.60700000000003l8.5 -6.3v33.692999999999984l-8.5 6.3z" fill="#14709b" stroke="#14709b" stroke-width="0.4"/><path d="M85.5 162.60700000000003l8.5 -6.3h25.3l-8.5 6.3z" fill="#1884b8" stroke="#1884b8" stroke-width="0.4"/><path d="M85.5 162.60700000000003h25.3v33.692999999999984h-25.3z" fill="#1cade4"/></svg>
<svg style="position:absolute;left:653.5px;top:279.3px;overflow:visible;" width="524" height="317" viewBox="0 0 524 317"><path d="M198.09999999999997 193.23700000000002l8.5 -6.3v3.062999999999988l-8.5 6.3z" fill="#14709b" stroke="#14709b" stroke-width="0.4"/><path d="M172.79999999999995 193.23700000000002l8.5 -6.3h25.3l-8.5 6.3z" fill="#1884b8" stroke="#1884b8" stroke-width="0.4"/><path d="M172.79999999999995 193.23700000000002h25.3v3.062999999999988h-25.3z" fill="#1cade4"/></svg>
<svg style="position:absolute;left:653.5px;top:279.3px;overflow:visible;" width="524" height="317" viewBox="0 0 524 317"><path d="M312.09999999999997 95.221l8.5 -6.3v101.07900000000001l-8.5 6.3z" fill="#1c5a8b" stroke="#1c5a8b" stroke-width="0.4"/><path d="M286.79999999999995 95.221l8.5 -6.3h25.3l-8.5 6.3z" fill="#2068a3" stroke="#2068a3" stroke-width="0.4"/><path d="M286.79999999999995 95.221h25.3v101.07900000000001h-25.3z" fill="#2683c6"/></svg>
<svg style="position:absolute;left:653.5px;top:279.3px;overflow:visible;" width="524" height="317" viewBox="0 0 524 317"><path d="M400.3 193.23700000000002l8.5 -6.3v3.062999999999988l-8.5 6.3z" fill="#1c5a8b" stroke="#1c5a8b" stroke-width="0.4"/><path d="M375.0 193.23700000000002l8.5 -6.3h25.3l-8.5 6.3z" fill="#2068a3" stroke="#2068a3" stroke-width="0.4"/><path d="M375.0 193.23700000000002h25.3v3.062999999999988h-25.3z" fill="#2683c6"/></svg>
<div style="position:absolute;left:734.20px;top:497.30px;line-height:0;font-size:12.4px;color:#595959;font-weight:normal;white-space:nowrap;transform:scaleX(0.9471);transform-origin:0 0;">Sum of d</div>
<div style="position:absolute;left:818.40px;top:497.30px;line-height:0;font-size:12.4px;color:#595959;font-weight:normal;white-space:nowrap;transform:scaleX(0.9554);transform-origin:0 0;">Count of c</div>
<div style="position:absolute;left:909.70px;top:497.30px;line-height:0;font-size:12.4px;color:#595959;font-weight:normal;white-space:nowrap;transform:scaleX(0.9471);transform-origin:0 0;">Sum of d</div>
<div style="position:absolute;left:994.30px;top:497.30px;line-height:0;font-size:12.4px;color:#595959;font-weight:normal;white-space:nowrap;transform:scaleX(0.9554);transform-origin:0 0;">Count of c</div>
<div style="position:absolute;left:794.70px;top:522.70px;line-height:0;font-size:12.4px;color:#595959;font-weight:normal;white-space:nowrap;">b1</div>
<div style="position:absolute;left:970.10px;top:522.70px;line-height:0;font-size:12.4px;color:#595959;font-weight:normal;white-space:nowrap;">b2</div>
<div style="position:absolute;left:794.70px;top:549.00px;line-height:0;font-size:12.4px;color:#595959;font-weight:normal;white-space:nowrap;">a1</div>
<div style="position:absolute;left:970.10px;top:549.00px;line-height:0;font-size:12.4px;color:#595959;font-weight:normal;white-space:nowrap;">a3</div>
<div style="position:absolute;left:1132px;top:417.8px;width:34.8px;height:19px;background:linear-gradient(#dedede,#c4c4c4);border-bottom:1px solid #b0b0b0;"></div>
<div style="position:absolute;left:1135.50px;top:427.84px;line-height:0;font-size:12px;color:#222;font-weight:normal;white-space:nowrap;">e</div>
<svg style="position:absolute;left:1154.0px;top:425.5px;overflow:visible;" width="7" height="4" viewBox="0 0 7 4"><path d="M0 0H7L3.5 4z" fill="#333"/></svg>
<div style="position:absolute;left:1137.7px;top:447px;width:7.8px;height:7.2px;background:#1cade4;"></div>
<div style="position:absolute;left:1147.80px;top:450.34px;line-height:0;font-size:12px;color:#595959;font-weight:normal;white-space:nowrap;">e1</div>
<div style="position:absolute;left:1137.7px;top:471.6px;width:7.8px;height:7.2px;background:#2683c6;"></div>
<div style="position:absolute;left:1147.80px;top:475.24px;line-height:0;font-size:12px;color:#595959;font-weight:normal;white-space:nowrap;">e3</div>
<div style="position:absolute;left:665.4px;top:568.1px;width:29.1px;height:19.5px;background:linear-gradient(#dedede,#c4c4c4);border-bottom:1px solid #b0b0b0;"></div>
<div style="position:absolute;left:669.00px;top:577.84px;line-height:0;font-size:12px;color:#222;font-weight:normal;white-space:nowrap;">a</div>
<svg style="position:absolute;left:683.0px;top:575.5px;overflow:visible;" width="7" height="4" viewBox="0 0 7 4"><path d="M0 0H7L3.5 4z" fill="#333"/></svg>
<div style="position:absolute;left:697px;top:568.1px;width:30.5px;height:19.5px;background:linear-gradient(#dedede,#c4c4c4);border-bottom:1px solid #b0b0b0;"></div>
<div style="position:absolute;left:700.00px;top:577.84px;line-height:0;font-size:12px;color:#222;font-weight:normal;white-space:nowrap;">b</div>
<svg style="position:absolute;left:715.0px;top:575.5px;overflow:visible;" width="7" height="4" viewBox="0 0 7 4"><path d="M0 0H7L3.5 4z" fill="#333"/></svg>
<div style="position:absolute;left:729.1px;top:568.1px;width:42.7px;height:19.5px;background:linear-gradient(#dedede,#c4c4c4);border-bottom:1px solid #b0b0b0;"></div>
<div style="position:absolute;left:733.00px;top:577.84px;line-height:0;font-size:12px;color:#222;font-weight:normal;white-space:nowrap;transform:scaleX(0.9636);transform-origin:0 0;">Values</div>
<div style="position:absolute;left:1131.7px;top:568.1px;width:16.1px;height:19.5px;background:linear-gradient(#dedede,#c4c4c4);border-bottom:1px solid #b0b0b0;"></div>
<div style="position:absolute;left:1149.6px;top:568.1px;width:15.8px;height:19.5px;background:linear-gradient(#dedede,#c4c4c4);border-bottom:1px solid #b0b0b0;"></div>
<svg style="position:absolute;left:1131.7px;top:568.5px;overflow:visible;" width="34" height="19" viewBox="0 0 34 19"><path d="M3 9.5h10M8 4.5v10" stroke="#777" stroke-width="2.2"/><path d="M20.5 9.5h10" stroke="#777" stroke-width="2.2"/></svg>
<div style="position:absolute;left:52px;top:66px;width:262.5px;height:509.5px;background:#ffffff;border:1px solid #c6c6c6;box-shadow:1px 1px 3px rgba(0,0,0,0.18);"></div>
<div style="position:absolute;left:53px;top:67px;width:242px;height:25.6px;background:#e8e8e8;"></div>
<div style="position:absolute;left:61.40px;top:79.96px;line-height:0;font-size:12.8px;color:#5a5a5a;font-weight:bold;white-space:nowrap;">Office</div>
<svg style="position:absolute;left:57px;top:96.4px;overflow:visible;" width="112" height="13" viewBox="0 0 112 13"><rect x="0" y="0" width="112" height="13" fill="#8a8a8a"/><rect x="0.7" y="0.6" width="12.9" height="11.8" fill="#44546A"/><rect x="14.7" y="0.6" width="12.9" height="11.8" fill="#E7E6E6"/><rect x="28.7" y="0.6" width="12.9" height="11.8" fill="#5B9BD5"/><rect x="42.7" y="0.6" width="12.9" height="11.8" fill="#ED7D31"/><rect x="56.7" y="0.6" width="12.9" height="11.8" fill="#A5A5A5"/><rect x="70.7" y="0.6" width="12.9" height="11.8" fill="#FFC000"/><rect x="84.7" y="0.6" width="12.9" height="11.8" fill="#4472C4"/><rect x="98.7" y="0.6" width="12.9" height="11.8" fill="#70AD47"/></svg>
<div style="position:absolute;left:183.00px;top:104.23px;line-height:0;font-size:12.9px;color:#595959;font-weight:normal;white-space:nowrap;">Office</div>
<div style="position:absolute;left:55.2px;top:116.2px;width:117px;height:16.5px;background:transparent;border:1.5px solid #a6d8b6;"></div>
<svg style="position:absolute;left:57px;top:117.65px;overflow:visible;" width="112" height="13" viewBox="0 0 112 13"><rect x="0" y="0" width="112" height="13" fill="#8a8a8a"/><rect x="0.7" y="0.6" width="12.9" height="11.8" fill="#1F497D"/><rect x="14.7" y="0.6" width="12.9" height="11.8" fill="#EEECE1"/><rect x="28.7" y="0.6" width="12.9" height="11.8" fill="#4F81BD"/><rect x="42.7" y="0.6" width="12.9" height="11.8" fill="#C0504D"/><rect x="56.7" y="0.6" width="12.9" height="11.8" fill="#9BBB59"/><rect x="70.7" y="0.6" width="12.9" height="11.8" fill="#8064A2"/><rect x="84.7" y="0.6" width="12.9" height="11.8" fill="#4BACC6"/><rect x="98.7" y="0.6" width="12.9" height="11.8" fill="#F79646"/></svg>
<div style="position:absolute;left:183.00px;top:125.48px;line-height:0;font-size:12.9px;color:#595959;font-weight:normal;white-space:nowrap;">Office 2007 - 2010</div>
<svg style="position:absolute;left:57px;top:138.9px;overflow:visible;" width="112" height="13" viewBox="0 0 112 13"><rect x="0" y="0" width="112" height="13" fill="#8a8a8a"/><rect x="0.7" y="0.6" width="12.9" height="11.8" fill="#000000"/><rect x="14.7" y="0.6" width="12.9" height="11.8" fill="#F8F8F8"/><rect x="28.7" y="0.6" width="12.9" height="11.8" fill="#DDDDDD"/><rect x="42.7" y="0.6" width="12.9" height="11.8" fill="#B2B2B2"/><rect x="56.7" y="0.6" width="12.9" height="11.8" fill="#969696"/><rect x="70.7" y="0.6" width="12.9" height="11.8" fill="#808080"/><rect x="84.7" y="0.6" width="12.9" height="11.8" fill="#5F5F5F"/><rect x="98.7" y="0.6" width="12.9" height="11.8" fill="#4D4D4D"/></svg>
<div style="position:absolute;left:183.00px;top:146.73px;line-height:0;font-size:12.9px;color:#595959;font-weight:normal;white-space:nowrap;">Grayscale</div>
<svg style="position:absolute;left:57px;top:160.15px;overflow:visible;" width="112" height="13" viewBox="0 0 112 13"><rect x="0" y="0" width="112" height="13" fill="#8a8a8a"/><rect x="0.7" y="0.6" width="12.9" height="11.8" fill="#242852"/><rect x="14.7" y="0.6" width="12.9" height="11.8" fill="#ACCBF9"/><rect x="28.7" y="0.6" width="12.9" height="11.8" fill="#4A66AC"/><rect x="42.7" y="0.6" width="12.9" height="11.8" fill="#629DD1"/><rect x="56.7" y="0.6" width="12.9" height="11.8" fill="#297FD5"/><rect x="70.7" y="0.6" width="12.9" height="11.8" fill="#7F8FA9"/><rect x="84.7" y="0.6" width="12.9" height="11.8" fill="#5AA2AE"/><rect x="98.7" y="0.6" width="12.9" height="11.8" fill="#9D90A0"/></svg>
<div style="position:absolute;left:183.00px;top:167.98px;line-height:0;font-size:12.9px;color:#595959;font-weight:normal;white-space:nowrap;">Blue Warm</div>
<svg style="position:absolute;left:57px;top:181.4px;overflow:visible;" width="112" height="13" viewBox="0 0 112 13"><rect x="0" y="0" width="112" height="13" fill="#8a8a8a"/><rect x="0.7" y="0.6" width="12.9" height="11.8" fill="#17406D"/><rect x="14.7" y="0.6" width="12.9" height="11.8" fill="#DBEFF9"/><rect x="28.7" y="0.6" width="12.9" height="11.8" fill="#0F6FC6"/><rect x="42.7" y="0.6" width="12.9" height="11.8" fill="#009DD9"/><rect x="56.7" y="0.6" width="12.9" height="11.8" fill="#0BD0D9"/><rect x="70.7" y="0.6" width="12.9" height="11.8" fill="#10CF9B"/><rect x="84.7" y="0.6" width="12.9" height="11.8" fill="#7CCA62"/><rect x="98.7" y="0.6" width="12.9" height="11.8" fill="#A5C249"/></svg>
<div style="position:absolute;left:183.00px;top:189.23px;line-height:0;font-size:12.9px;color:#595959;font-weight:normal;white-space:nowrap;">Blue</div>
<div style="position:absolute;left:53px;top:199.2px;width:242px;height:20.7px;background:#c6c6c6;"></div>
<svg style="position:absolute;left:57px;top:202.65px;overflow:visible;" width="112" height="13" viewBox="0 0 112 13"><rect x="0" y="0" width="112" height="13" fill="#8a8a8a"/><rect x="0.7" y="0.6" width="12.9" height="11.8" fill="#335B74"/><rect x="14.7" y="0.6" width="12.9" height="11.8" fill="#DFE3E5"/><rect x="28.7" y="0.6" width="12.9" height="11.8" fill="#1CADE4"/><rect x="42.7" y="0.6" width="12.9" height="11.8" fill="#2683C6"/><rect x="56.7" y="0.6" width="12.9" height="11.8" fill="#27CED7"/><rect x="70.7" y="0.6" width="12.9" height="11.8" fill="#42BA97"/><rect x="84.7" y="0.6" width="12.9" height="11.8" fill="#3E8853"/><rect x="98.7" y="0.6" width="12.9" height="11.8" fill="#62A39F"/></svg>
<div style="position:absolute;left:183.00px;top:210.48px;line-height:0;font-size:12.9px;color:#262626;font-weight:normal;white-space:nowrap;">Blue II</div>
<svg style="position:absolute;left:57px;top:223.9px;overflow:visible;" width="112" height="13" viewBox="0 0 112 13"><rect x="0" y="0" width="112" height="13" fill="#8a8a8a"/><rect x="0.7" y="0.6" width="12.9" height="11.8" fill="#373545"/><rect x="14.7" y="0.6" width="12.9" height="11.8" fill="#CEDBE6"/><rect x="28.7" y="0.6" width="12.9" height="11.8" fill="#3494BA"/><rect x="42.7" y="0.6" width="12.9" height="11.8" fill="#58B6C0"/><rect x="56.7" y="0.6" width="12.9" height="11.8" fill="#75BDA7"/><rect x="70.7" y="0.6" width="12.9" height="11.8" fill="#7A8C8E"/><rect x="84.7" y="0.6" width="12.9" height="11.8" fill="#84ACB6"/><rect x="98.7" y="0.6" width="12.9" height="11.8" fill="#2683C6"/></svg>
<div style="position:absolute;left:183.00px;top:231.73px;line-height:0;font-size:12.9px;color:#595959;font-weight:normal;white-space:nowrap;">Blue Green</div>
<svg style="position:absolute;left:57px;top:245.15px;overflow:visible;" width="112" height="13" viewBox="0 0 112 13"><rect x="0" y="0" width="112" height="13" fill="#8a8a8a"/><rect x="0.7" y="0.6" width="12.9" height="11.8" fill="#455F51"/><rect x="14.7" y="0.6" width="12.9" height="11.8" fill="#E3DED1"/><rect x="28.7" y="0.6" width="12.9" height="11.8" fill="#549E39"/><rect x="42.7" y="0.6" width="12.9" height="11.8" fill="#8AB833"/><rect x="56.7" y="0.6" width="12.9" height="11.8" fill="#C0CF3A"/><rect x="70.7" y="0.6" width="12.9" height="11.8" fill="#029676"/><rect x="84.7" y="0.6" width="12.9" height="11.8" fill="#4AB5C4"/><rect x="98.7" y="0.6" width="12.9" height="11.8" fill="#0989B1"/></svg>
<div style="position:absolute;left:183.00px;top:252.98px;line-height:0;font-size:12.9px;color:#595959;font-weight:normal;white-space:nowrap;">Green</div>
<svg style="position:absolute;left:57px;top:266.4px;overflow:visible;" width="112" height="13" viewBox="0 0 112 13"><rect x="0" y="0" width="112" height="13" fill="#8a8a8a"/><rect x="0.7" y="0.6" width="12.9" height="11.8" fill="#455F51"/><rect x="14.7" y="0.6" width="12.9" height="11.8" fill="#E3DED1"/><rect x="28.7" y="0.6" width="12.9" height="11.8" fill="#99CB38"/><rect x="42.7" y="0.6" width="12.9" height="11.8" fill="#63A537"/><rect x="56.7" y="0.6" width="12.9" height="11.8" fill="#37A76F"/><rect x="70.7" y="0.6" width="12.9" height="11.8" fill="#44C1A3"/><rect x="84.7" y="0.6" width="12.9" height="11.8" fill="#4EB3CF"/><rect x="98.7" y="0.6" width="12.9" height="11.8" fill="#51C3F9"/></svg>
<div style="position:absolute;left:183.00px;top:274.23px;line-height:0;font-size:12.9px;color:#595959;font-weight:normal;white-space:nowrap;">Green Yellow</div>
<svg style="position:absolute;left:57px;top:287.65px;overflow:visible;" width="112" height="13" viewBox="0 0 112 13"><rect x="0" y="0" width="112" height="13" fill="#8a8a8a"/><rect x="0.7" y="0.6" width="12.9" height="11.8" fill="#39302A"/><rect x="14.7" y="0.6" width="12.9" height="11.8" fill="#E5DEDB"/><rect x="28.7" y="0.6" width="12.9" height="11.8" fill="#FFCA08"/><rect x="42.7" y="0.6" width="12.9" height="11.8" fill="#F8931D"/><rect x="56.7" y="0.6" width="12.9" height="11.8" fill="#CE8D3E"/><rect x="70.7" y="0.6" width="12.9" height="11.8" fill="#EC7016"/><rect x="84.7" y="0.6" width="12.9" height="11.8" fill="#E64823"/><rect x="98.7" y="0.6" width="12.9" height="11.8" fill="#9C6A6A"/></svg>
<div style="position:absolute;left:183.00px;top:295.48px;line-height:0;font-size:12.9px;color:#595959;font-weight:normal;white-space:nowrap;">Yellow</div>
<svg style="position:absolute;left:57px;top:308.9px;overflow:visible;" width="112" height="13" viewBox="0 0 112 13"><rect x="0" y="0" width="112" height="13" fill="#8a8a8a"/><rect x="0.7" y="0.6" width="12.9" height="11.8" fill="#4E3B30"/><rect x="14.7" y="0.6" width="12.9" height="11.8" fill="#FBEEC9"/><rect x="28.7" y="0.6" width="12.9" height="11.8" fill="#F0A22E"/><rect x="42.7" y="0.6" width="12.9" height="11.8" fill="#A5644E"/><rect x="56.7" y="0.6" width="12.9" height="11.8" fill="#B58B80"/><rect x="70.7" y="0.6" width="12.9" height="11.8" fill="#C3986D"/><rect x="84.7" y="0.6" width="12.9" height="11.8" fill="#A19574"/><rect x="98.7" y="0.6" width="12.9" height="11.8" fill="#C17529"/></svg>
<div style="position:absolute;left:183.00px;top:316.73px;line-height:0;font-size:12.9px;color:#595959;font-weight:normal;white-space:nowrap;">Yellow Orange</div>
<svg style="position:absolute;left:57px;top:330.15px;overflow:visible;" width="112" height="13" viewBox="0 0 112 13"><rect x="0" y="0" width="112" height="13" fill="#8a8a8a"/><rect x="0.7" y="0.6" width="12.9" height="11.8" fill="#637052"/><rect x="14.7" y="0.6" width="12.9" height="11.8" fill="#CCDDEA"/><rect x="28.7" y="0.6" width="12.9" height="11.8" fill="#E48312"/><rect x="42.7" y="0.6" width="12.9" height="11.8" fill="#BD582C"/><rect x="56.7" y="0.6" width="12.9" height="11.8" fill="#865640"/><rect x="70.7" y="0.6" width="12.9" height="11.8" fill="#9B8357"/><rect x="84.7" y="0.6" width="12.9" height="11.8" fill="#C2BC80"/><rect x="98.7" y="0.6" width="12.9" height="11.8" fill="#94A088"/></svg>
<div style="position:absolute;left:183.00px;top:337.98px;line-height:0;font-size:12.9px;color:#595959;font-weight:normal;white-space:nowrap;">Orange</div>
<svg style="position:absolute;left:57px;top:351.4px;overflow:visible;" width="112" height="13" viewBox="0 0 112 13"><rect x="0" y="0" width="112" height="13" fill="#8a8a8a"/><rect x="0.7" y="0.6" width="12.9" height="11.8" fill="#696464"/><rect x="14.7" y="0.6" width="12.9" height="11.8" fill="#E9E5DC"/><rect x="28.7" y="0.6" width="12.9" height="11.8" fill="#D34817"/><rect x="42.7" y="0.6" width="12.9" height="11.8" fill="#9B2D1F"/><rect x="56.7" y="0.6" width="12.9" height="11.8" fill="#A28E6A"/><rect x="70.7" y="0.6" width="12.9" height="11.8" fill="#956251"/><rect x="84.7" y="0.6" width="12.9" height="11.8" fill="#918485"/><rect x="98.7" y="0.6" width="12.9" height="11.8" fill="#855D5D"/></svg>
<div style="position:absolute;left:183.00px;top:359.23px;line-height:0;font-size:12.9px;color:#595959;font-weight:normal;white-space:nowrap;">Orange Red</div>
<svg style="position:absolute;left:57px;top:372.65px;overflow:visible;" width="112" height="13" viewBox="0 0 112 13"><rect x="0" y="0" width="112" height="13" fill="#8a8a8a"/><rect x="0.7" y="0.6" width="12.9" height="11.8" fill="#505046"/><rect x="14.7" y="0.6" width="12.9" height="11.8" fill="#EEECE4"/><rect x="28.7" y="0.6" width="12.9" height="11.8" fill="#E84C22"/><rect x="42.7" y="0.6" width="12.9" height="11.8" fill="#FFBD47"/><rect x="56.7" y="0.6" width="12.9" height="11.8" fill="#B64926"/><rect x="70.7" y="0.6" width="12.9" height="11.8" fill="#FF8427"/><rect x="84.7" y="0.6" width="12.9" height="11.8" fill="#CC9900"/><rect x="98.7" y="0.6" width="12.9" height="11.8" fill="#B22600"/></svg>
<div style="position:absolute;left:183.00px;top:380.48px;line-height:0;font-size:12.9px;color:#595959;font-weight:normal;white-space:nowrap;">Red Orange</div>
<svg style="position:absolute;left:57px;top:393.9px;overflow:visible;" width="112" height="13" viewBox="0 0 112 13"><rect x="0" y="0" width="112" height="13" fill="#8a8a8a"/><rect x="0.7" y="0.6" width="12.9" height="11.8" fill="#323232"/><rect x="14.7" y="0.6" width="12.9" height="11.8" fill="#E5C243"/><rect x="28.7" y="0.6" width="12.9" height="11.8" fill="#A5300F"/><rect x="42.7" y="0.6" width="12.9" height="11.8" fill="#D55816"/><rect x="56.7" y="0.6" width="12.9" height="11.8" fill="#E19825"/><rect x="70.7" y="0.6" width="12.9" height="11.8" fill="#B19C7D"/><rect x="84.7" y="0.6" width="12.9" height="11.8" fill="#7F5F52"/><rect x="98.7" y="0.6" width="12.9" height="11.8" fill="#B27D49"/></svg>
<div style="position:absolute;left:183.00px;top:401.73px;line-height:0;font-size:12.9px;color:#595959;font-weight:normal;white-space:nowrap;">Red</div>
<svg style="position:absolute;left:57px;top:415.15px;overflow:visible;" width="112" height="13" viewBox="0 0 112 13"><rect x="0" y="0" width="112" height="13" fill="#8a8a8a"/><rect x="0.7" y="0.6" width="12.9" height="11.8" fill="#454551"/><rect x="14.7" y="0.6" width="12.9" height="11.8" fill="#D8D9DC"/><rect x="28.7" y="0.6" width="12.9" height="11.8" fill="#E32D91"/><rect x="42.7" y="0.6" width="12.9" height="11.8" fill="#C830CC"/><rect x="56.7" y="0.6" width="12.9" height="11.8" fill="#4EA6DC"/><rect x="70.7" y="0.6" width="12.9" height="11.8" fill="#4775E7"/><rect x="84.7" y="0.6" width="12.9" height="11.8" fill="#8971E1"/><rect x="98.7" y="0.6" width="12.9" height="11.8" fill="#D54773"/></svg>
<div style="position:absolute;left:183.00px;top:422.98px;line-height:0;font-size:12.9px;color:#595959;font-weight:normal;white-space:nowrap;">Red Violet</div>
<svg style="position:absolute;left:57px;top:436.4px;overflow:visible;" width="112" height="13" viewBox="0 0 112 13"><rect x="0" y="0" width="112" height="13" fill="#8a8a8a"/><rect x="0.7" y="0.6" width="12.9" height="11.8" fill="#373545"/><rect x="14.7" y="0.6" width="12.9" height="11.8" fill="#DCD8DC"/><rect x="28.7" y="0.6" width="12.9" height="11.8" fill="#AD84C6"/><rect x="42.7" y="0.6" width="12.9" height="11.8" fill="#8784C7"/><rect x="56.7" y="0.6" width="12.9" height="11.8" fill="#5D739A"/><rect x="70.7" y="0.6" width="12.9" height="11.8" fill="#6997AF"/><rect x="84.7" y="0.6" width="12.9" height="11.8" fill="#84ACB6"/><rect x="98.7" y="0.6" width="12.9" height="11.8" fill="#6F8183"/></svg>
<div style="position:absolute;left:183.00px;top:444.23px;line-height:0;font-size:12.9px;color:#595959;font-weight:normal;white-space:nowrap;">Violet</div>
<svg style="position:absolute;left:57px;top:457.65px;overflow:visible;" width="112" height="13" viewBox="0 0 112 13"><rect x="0" y="0" width="112" height="13" fill="#8a8a8a"/><rect x="0.7" y="0.6" width="12.9" height="11.8" fill="#632E62"/><rect x="14.7" y="0.6" width="12.9" height="11.8" fill="#EAE5EB"/><rect x="28.7" y="0.6" width="12.9" height="11.8" fill="#92278F"/><rect x="42.7" y="0.6" width="12.9" height="11.8" fill="#9B57D3"/><rect x="56.7" y="0.6" width="12.9" height="11.8" fill="#755DD9"/><rect x="70.7" y="0.6" width="12.9" height="11.8" fill="#665EB8"/><rect x="84.7" y="0.6" width="12.9" height="11.8" fill="#45A5ED"/><rect x="98.7" y="0.6" width="12.9" height="11.8" fill="#5982DB"/></svg>
<div style="position:absolute;left:183.00px;top:465.48px;line-height:0;font-size:12.9px;color:#595959;font-weight:normal;white-space:nowrap;">Violet II</div>
<svg style="position:absolute;left:57px;top:478.9px;overflow:visible;" width="112" height="13" viewBox="0 0 112 13"><rect x="0" y="0" width="112" height="13" fill="#8a8a8a"/><rect x="0.7" y="0.6" width="12.9" height="11.8" fill="#775F55"/><rect x="14.7" y="0.6" width="12.9" height="11.8" fill="#EBDDC3"/><rect x="28.7" y="0.6" width="12.9" height="11.8" fill="#94B6D2"/><rect x="42.7" y="0.6" width="12.9" height="11.8" fill="#DD8047"/><rect x="56.7" y="0.6" width="12.9" height="11.8" fill="#A5AB81"/><rect x="70.7" y="0.6" width="12.9" height="11.8" fill="#D8B25C"/><rect x="84.7" y="0.6" width="12.9" height="11.8" fill="#7BA79D"/><rect x="98.7" y="0.6" width="12.9" height="11.8" fill="#968C8C"/></svg>
<div style="position:absolute;left:183.00px;top:486.73px;line-height:0;font-size:12.9px;color:#595959;font-weight:normal;white-space:nowrap;">Median</div>
<svg style="position:absolute;left:57px;top:500.15px;overflow:visible;" width="112" height="13" viewBox="0 0 112 13"><rect x="0" y="0" width="112" height="13" fill="#8a8a8a"/><rect x="0.7" y="0.6" width="12.9" height="11.8" fill="#444D26"/><rect x="14.7" y="0.6" width="12.9" height="11.8" fill="#FEFAC9"/><rect x="28.7" y="0.6" width="12.9" height="11.8" fill="#A5B592"/><rect x="42.7" y="0.6" width="12.9" height="11.8" fill="#F3A447"/><rect x="56.7" y="0.6" width="12.9" height="11.8" fill="#E7BC29"/><rect x="70.7" y="0.6" width="12.9" height="11.8" fill="#D092A7"/><rect x="84.7" y="0.6" width="12.9" height="11.8" fill="#9C85C0"/><rect x="98.7" y="0.6" width="12.9" height="11.8" fill="#809EC2"/></svg>
<div style="position:absolute;left:183.00px;top:507.98px;line-height:0;font-size:12.9px;color:#595959;font-weight:normal;white-space:nowrap;">Paper</div>
<svg style="position:absolute;left:57px;top:521.4px;overflow:visible;" width="112" height="13" viewBox="0 0 112 13"><rect x="0" y="0" width="112" height="13" fill="#8a8a8a"/><rect x="0.7" y="0.6" width="12.9" height="11.8" fill="#5E5E5E"/><rect x="14.7" y="0.6" width="12.9" height="11.8" fill="#DDDDDD"/><rect x="28.7" y="0.6" width="12.9" height="11.8" fill="#418AB3"/><rect x="42.7" y="0.6" width="12.9" height="11.8" fill="#A6B727"/><rect x="56.7" y="0.6" width="12.9" height="11.8" fill="#F69200"/><rect x="70.7" y="0.6" width="12.9" height="11.8" fill="#838383"/><rect x="84.7" y="0.6" width="12.9" height="11.8" fill="#FEC306"/><rect x="98.7" y="0.6" width="12.9" height="11.8" fill="#DF5327"/></svg>
<div style="position:absolute;left:183.00px;top:529.23px;line-height:0;font-size:12.9px;color:#595959;font-weight:normal;white-space:nowrap;">Marquee</div>
<div style="position:absolute;left:295.5px;top:67px;width:16.5px;height:472px;background:#f0f0f0;"></div>
<div style="position:absolute;left:295.5px;top:70px;width:16.5px;height:17px;background:#ffffff;border:1px solid #c9c9c9;"></div>
<svg style="position:absolute;left:300px;top:76.2px;overflow:visible;" width="8" height="4.5" viewBox="0 0 8 4.5"><path d="M0 4.5H8L4 0z" fill="#555"/></svg>
<div style="position:absolute;left:295.5px;top:86px;width:16.5px;height:397.5px;background:#ffffff;border:1px solid #c9c9c9;"></div>
<div style="position:absolute;left:295.5px;top:520.5px;width:16.5px;height:16.5px;background:#ffffff;border:1px solid #c9c9c9;"></div>
<svg style="position:absolute;left:300.0px;top:526.45px;overflow:visible;" width="8" height="4.5" viewBox="0 0 8 4.5"><path d="M0 0H8L4.0 4.5z" fill="#555"/></svg>
<div style="position:absolute;left:53.5px;top:538.5px;width:258px;height:1px;background:#dadada;"></div>
<div style="position:absolute;left:84.60px;top:554.83px;line-height:0;font-size:12.9px;color:#595959;font-weight:normal;white-space:nowrap;transform:scaleX(0.9631);transform-origin:0 0;"><u>C</u>ustomize Colors...</div>
<svg style="position:absolute;left:172px;top:568px;overflow:visible;" width="20" height="4" viewBox="0 0 20 4"><rect x="1" y="1" width="1.5" height="1.5" fill="#a0a0a0"/><rect x="6" y="1" width="1.5" height="1.5" fill="#a0a0a0"/><rect x="11" y="1" width="1.5" height="1.5" fill="#a0a0a0"/><rect x="16" y="1" width="1.5" height="1.5" fill="#a0a0a0"/></svg>
<svg style="position:absolute;left:0;top:0;overflow:visible" width="1" height="1"><text x="0" y="0" font-family="Liberation Sans" font-size="55.44" fill="#a7cff0" stroke="#2581d0" stroke-width="3.65" stroke-linejoin="round" paint-order="stroke" transform="translate(119.60 76.20) scale(0.9751 1)">2</text></svg>
<svg style="position:absolute;left:0;top:0;overflow:visible" width="1" height="1"><text x="0" y="0" font-family="Liberation Sans" font-size="54.46" fill="#a7cff0" stroke="#2581d0" stroke-width="3.63" stroke-linejoin="round" paint-order="stroke" transform="translate(279.57 234.81) scale(0.9822 1)">3</text></svg>
<svg style="position:absolute;left:0;top:0;overflow:visible" width="1" height="1"><path d="M269.8 3.9 H264.3 L253.1 10.6 V14.9 L261.4 11.4 V34.7 H253.5 V42.6 H277.1 V34.7 H270.4 Z" fill="#a7cff0" stroke="#2581d0" stroke-width="3.0" stroke-linejoin="round"/></svg>
</body></html>
